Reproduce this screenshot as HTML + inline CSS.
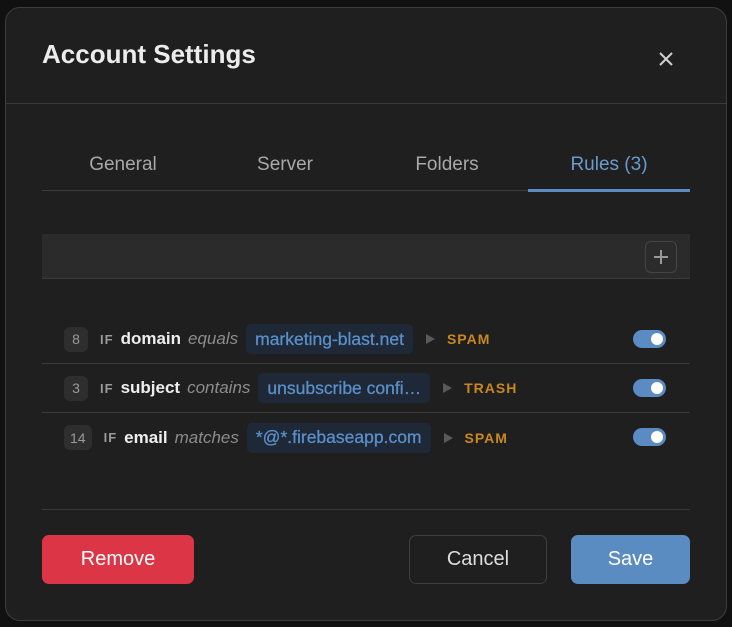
<!DOCTYPE html>
<html><head><meta charset="utf-8"><style>
*{box-sizing:border-box;margin:0;padding:0}
body{width:732px;height:627px;background:#111;font-family:"Liberation Sans",sans-serif;position:relative;overflow:hidden}
.modal{position:absolute;left:5px;top:7px;width:722px;height:614px;background:#1f1f1f;border:1px solid #3d3d3d;border-radius:15px}
.a{position:absolute}
.title{left:36px;top:31px;font-size:26px;font-weight:bold;color:#ececec}
.hl{left:0;right:0;top:95px;height:1px;background:#3a3a3a}
.tab{top:146px;width:162px;text-align:center;font-size:19px;color:#a8a8a8}
.row{left:36px;width:648px;height:49px;border-bottom:1px solid #3a3a3a;display:flex;align-items:center;padding-left:22px;font-size:17px;white-space:nowrap}
.num{background:#2e2e2e;color:#9a9a9a;font-size:14px;border-radius:6px;height:25px;min-width:24px;padding:0 6px;display:flex;align-items:center;justify-content:center;margin-right:12px}
.if{color:#9a9a9a;font-size:13px;font-weight:bold;letter-spacing:1px;margin-right:7px}
.f{color:#eee;font-weight:bold;margin-right:7px}
.op{color:#8c8c8c;font-style:italic;margin-right:8px}
.val{background:#1e2836;color:#5a8fc9;padding:0 9px;height:30px;display:flex;align-items:center;border-radius:5px;margin-right:13px;font-size:17.5px;-webkit-text-stroke:0.3px #5a8fc9}
.tri{width:0;height:0;border-left:9px solid #5a5a5a;border-top:5px solid transparent;border-bottom:5px solid transparent;margin-right:12px}
.act{color:#c8881e;font-size:14px;font-weight:bold;letter-spacing:1px}
.tog{position:absolute;left:591px;width:33px;height:18px;border-radius:9px;background:#5a8cc3}
.tog:after{content:"";position:absolute;right:3px;top:3px;width:12px;height:12px;border-radius:50%;background:#fff}
.btn{top:527px;height:49px;border-radius:7px;font-size:20px;display:flex;align-items:center;justify-content:center}
</style></head><body>
<div class="modal">
<div class="a title">Account Settings</div>
<div class="a" style="left:650px;top:41px;width:20px;height:20px">
<svg width="20" height="20"><path d="M4 4L16 16M16 4L4 16" stroke="#cfcfcf" stroke-width="2"/></svg></div>
<div class="a hl"></div>
<div class="a tab" style="left:36px">General</div>
<div class="a tab" style="left:198px">Server</div>
<div class="a tab" style="left:360px">Folders</div>
<div class="a tab" style="left:522px;color:#6a9bd0">Rules (3)</div>
<div class="a" style="left:36px;top:182px;width:648px;height:1px;background:#3a3a3a"></div>
<div class="a" style="left:522px;top:181px;width:162px;height:3px;background:#5a8cc3"></div>
<div class="a" style="left:36px;top:226px;width:648px;height:45px;background:#2b2b2b;border-bottom:1px solid #3c3c3c"></div>
<div class="a" style="left:639px;top:233px;width:32px;height:32px;border:1px solid #444;border-radius:6px">
<svg width="30" height="30"><path d="M15 8V22M8 15H22" stroke="#9a9a9a" stroke-width="2"/></svg></div>

<div class="a row" style="top:307px"><span class="num">8</span><span class="if">IF</span><span class="f">domain</span><span class="op">equals</span><span class="val">marketing-blast.net</span><span class="tri"></span><span class="act">SPAM</span><span class="tog" style="top:15px"></span></div>
<div class="a row" style="top:356px"><span class="num">3</span><span class="if">IF</span><span class="f">subject</span><span class="op">contains</span><span class="val">unsubscribe confi…</span><span class="tri"></span><span class="act">TRASH</span><span class="tog" style="top:15px"></span></div>
<div class="a row" style="top:405px;border-bottom:none"><span class="num">14</span><span class="if">IF</span><span class="f">email</span><span class="op">matches</span><span class="val">*@*.firebaseapp.com</span><span class="tri"></span><span class="act">SPAM</span><span class="tog" style="top:15px"></span></div>

<div class="a" style="left:36px;top:501px;width:648px;height:1px;background:#3a3a3a"></div>
<div class="a btn" style="left:36px;width:152px;background:#dc3545;color:#fff">Remove</div>
<div class="a btn" style="left:403px;width:138px;border:1px solid #3e3e3e;color:#ddd">Cancel</div>
<div class="a btn" style="left:565px;width:119px;background:#5a8cc1;color:#fff">Save</div>
</div>
</body></html>
